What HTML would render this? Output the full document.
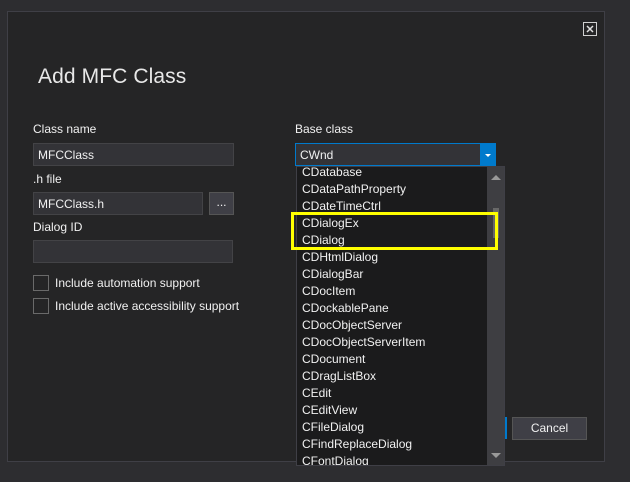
<!DOCTYPE html>
<html><head><style>
*{margin:0;padding:0;box-sizing:border-box}
body{width:630px;height:482px;background:#2d2d30;position:relative;overflow:hidden;font-family:"Liberation Sans",sans-serif;font-size:12px;color:#f1f1f1}
.a{position:absolute}
.dlg{left:7px;top:11px;width:598px;height:451px;background:#252526;border:1px solid #3f3f46}
.box{background:#333337;border:1px solid #434346;height:23px;padding:4px 4px;font-size:12px;color:#f1f1f1}
.lbl{font-size:12px;color:#f1f1f1}
.cb{width:16px;height:16px;border:1px solid #6a6a6a;background:#252526}
.it{position:absolute;left:5px;font-size:12px;color:#f1f1f1;height:17px;line-height:17px}
</style></head><body>
<div class="a dlg"></div>
<svg class="a" style="left:582px;top:21px" width="16" height="16" viewBox="0 0 16 16"><rect x="1.5" y="1.5" width="13" height="13" fill="none" stroke="#d0d0d0"/><path d="M5 5L11 11M11 5L5 11" stroke="#e0e0e0" stroke-width="1.5"/></svg>
<div class="a" style="left:38px;top:65px;font-size:21px;color:#e8e8e8;letter-spacing:0.1px">Add MFC Class</div>
<div class="a lbl" style="left:33px;top:122px">Class name</div>
<div class="a box" style="left:33px;top:143px;width:201px">MFCClass</div>
<div class="a lbl" style="left:33px;top:172px">.h file</div>
<div class="a box" style="left:33px;top:192px;width:170px">MFCClass.h</div>
<div class="a box" style="left:209px;top:192px;width:25px;padding:2px 0;text-align:center;background:#3f3f46;border-color:#555">...</div>
<div class="a lbl" style="left:33px;top:220px">Dialog ID</div>
<div class="a box" style="left:33px;top:240px;width:200px"></div>
<div class="a cb" style="left:33px;top:275px"></div>
<div class="a lbl" style="left:55px;top:276px">Include automation support</div>
<div class="a cb" style="left:33px;top:298px"></div>
<div class="a lbl" style="left:55px;top:299px">Include active accessibility support</div>
<div class="a lbl" style="left:295px;top:122px">Base class</div>
<div class="a box" style="left:295px;top:143px;width:201px;border-color:#007acc">CWnd</div>
<div class="a" style="left:480px;top:143px;width:16px;height:23px;background:#007acc"></div>
<div class="a" style="left:485px;top:154px;width:0;height:0;border-left:3px solid transparent;border-right:3px solid transparent;border-top:3px solid #fff"></div>
<div class="a" style="left:505px;top:417px;width:2px;height:22px;background:#007acc"></div>
<div class="a" style="left:512px;top:417px;width:75px;height:23px;background:#3f3f46;border:1px solid #555;text-align:center;line-height:21px">Cancel</div>
<div class="a" style="left:296px;top:166px;width:209px;height:300px;background:#1b1b1c;border:1px solid #3f3f46;overflow:hidden">
<div class="a" style="left:190px;top:0;width:18px;height:300px;background:#3e3e42"></div>
<div class="a" style="left:194px;top:8px;border-left:5px solid transparent;border-right:5px solid transparent;border-bottom:5px solid #999"></div>
<div class="a" style="left:194px;top:286px;border-left:5px solid transparent;border-right:5px solid transparent;border-top:5px solid #999"></div>
<div class="a" style="left:196px;top:41px;width:6px;height:30px;background:#686868"></div>
<div class="it" style="top:-3px">CDatabase</div>
<div class="it" style="top:14px">CDataPathProperty</div>
<div class="it" style="top:31px">CDateTimeCtrl</div>
<div class="it" style="top:48px">CDialogEx</div>
<div class="it" style="top:65px">CDialog</div>
<div class="it" style="top:82px">CDHtmlDialog</div>
<div class="it" style="top:99px">CDialogBar</div>
<div class="it" style="top:116px">CDocItem</div>
<div class="it" style="top:133px">CDockablePane</div>
<div class="it" style="top:150px">CDocObjectServer</div>
<div class="it" style="top:167px">CDocObjectServerItem</div>
<div class="it" style="top:184px">CDocument</div>
<div class="it" style="top:201px">CDragListBox</div>
<div class="it" style="top:218px">CEdit</div>
<div class="it" style="top:235px">CEditView</div>
<div class="it" style="top:252px">CFileDialog</div>
<div class="it" style="top:269px">CFindReplaceDialog</div>
<div class="it" style="top:286px">CFontDialog</div>
</div>
<div class="a" style="left:291px;top:212px;width:207px;height:38px;border:3px solid #ffff00"></div>
</body></html>
